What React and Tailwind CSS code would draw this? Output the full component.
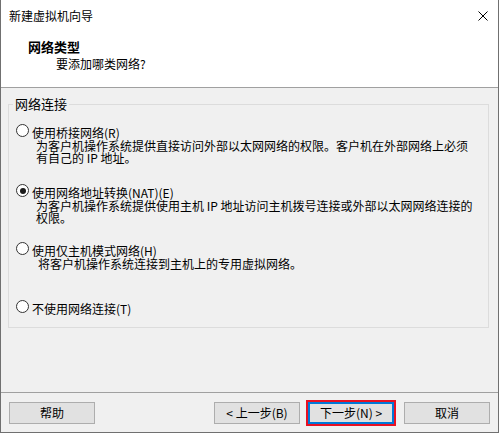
import React from "react";

function Radio({ checked }) {
  return (
    <span className="-mt-[1px] flex h-[13px] w-[13px] shrink-0 items-center justify-center rounded-full border border-[#333333] bg-white">
      {checked && <span className="h-[6px] w-[6px] rounded-full bg-[#1a1a1a]" />}
    </span>
  );
}

function Option({ checked, label, lines, descPad = "pl-[27px]", h }) {
  return (
    <div className={`flex flex-col ${h}`}>
      <div className="flex items-start pl-[7px] leading-[15px]">
        <Radio checked={checked} />
        <span className="ml-[3px] whitespace-nowrap">{label}</span>
      </div>
      {lines.map((l, i) => (
        <div key={i} className={`${descPad} whitespace-nowrap leading-[12px]`}>
          {l}
        </div>
      ))}
    </div>
  );
}

function Btn({ children, focused }) {
  const base =
    "flex h-[22px] w-[86px] items-center justify-center bg-[#e1e1e1] leading-none whitespace-nowrap";
  return focused ? (
    <div className={`${base} border-2 border-[#0078d7] outline-2 outline-[#e81123]`}>{children}</div>
  ) : (
    <div className={`${base} border border-[#adadad]`}>{children}</div>
  );
}

export default function App() {
  return (
    <div className="flex h-[433px] w-[499px] flex-col border-b border-l border-r border-[#707070] bg-[#f0f0f0] font-['Noto_Sans_CJK_SC','Noto_Sans',sans-serif] text-[12px] text-black">
      {/* header */}
      <div className="flex h-[88px] shrink-0 flex-col border-b border-[#a0a0a0] bg-white">
        <div className="flex h-[31px] items-center justify-between pl-[8px] pr-[10px]">
          <span className="leading-[16px]">新建虚拟机向导</span>
          <svg width="10" height="10" viewBox="0 0 10 10" className="block">
            <path d="M0.5 0.5 L9.5 9.5 M9.5 0.5 L0.5 9.5" stroke="#000" strokeWidth="1" fill="none" />
          </svg>
        </div>
        <div className="mt-[8px] pl-[27px] text-[13px] font-bold leading-[16px]">网络类型</div>
        <div className="mt-[1px] pl-[55px] leading-[16px]">要添加哪类网络?</div>
      </div>

      {/* main */}
      <div className="flex-1 pl-[7px] pt-[8px]">
        <fieldset className="h-[232px] w-[481px] border border-[#dcdcdc]">
          <legend className="ml-[4px] px-[2px] text-[13px] leading-[16px]">网络连接</legend>
          <div className="mt-[13px] flex flex-col">
            <Option
              h="h-[60px]"
              label="使用桥接网络(R)"
              lines={[
                "为客户机操作系统提供直接访问外部以太网网络的权限。客户机在外部网络上必须",
                "有自己的 IP 地址。",
              ]}
            />
            <Option
              h="h-[58px]"
              checked
              label="使用网络地址转换(NAT)(E)"
              lines={[
                "为客户机操作系统提供使用主机 IP 地址访问主机拨号连接或外部以太网网络连接的",
                "权限。",
              ]}
            />
            <Option
              h="h-[58px]"
              descPad="pl-[29px]"
              label="使用仅主机模式网络(H)"
              lines={["将客户机操作系统连接到主机上的专用虚拟网络。"]}
            />
            <Option h="h-[15px]" label="不使用网络连接(T)" lines={[]} />
          </div>
        </fieldset>
      </div>

      {/* footer */}
      <div className="flex h-[40px] shrink-0 items-start border-t border-[#a0a0a0] pl-[8px] pr-[8px] pt-[9px]">
        <Btn>帮助</Btn>
        <div className="flex-1" />
        <Btn>&lt; 上一步(B)</Btn>
        <div className="w-[8px]" />
        <Btn focused>下一步(N) &gt;</Btn>
        <div className="w-[10px]" />
        <Btn>取消</Btn>
      </div>
    </div>
  );
}
